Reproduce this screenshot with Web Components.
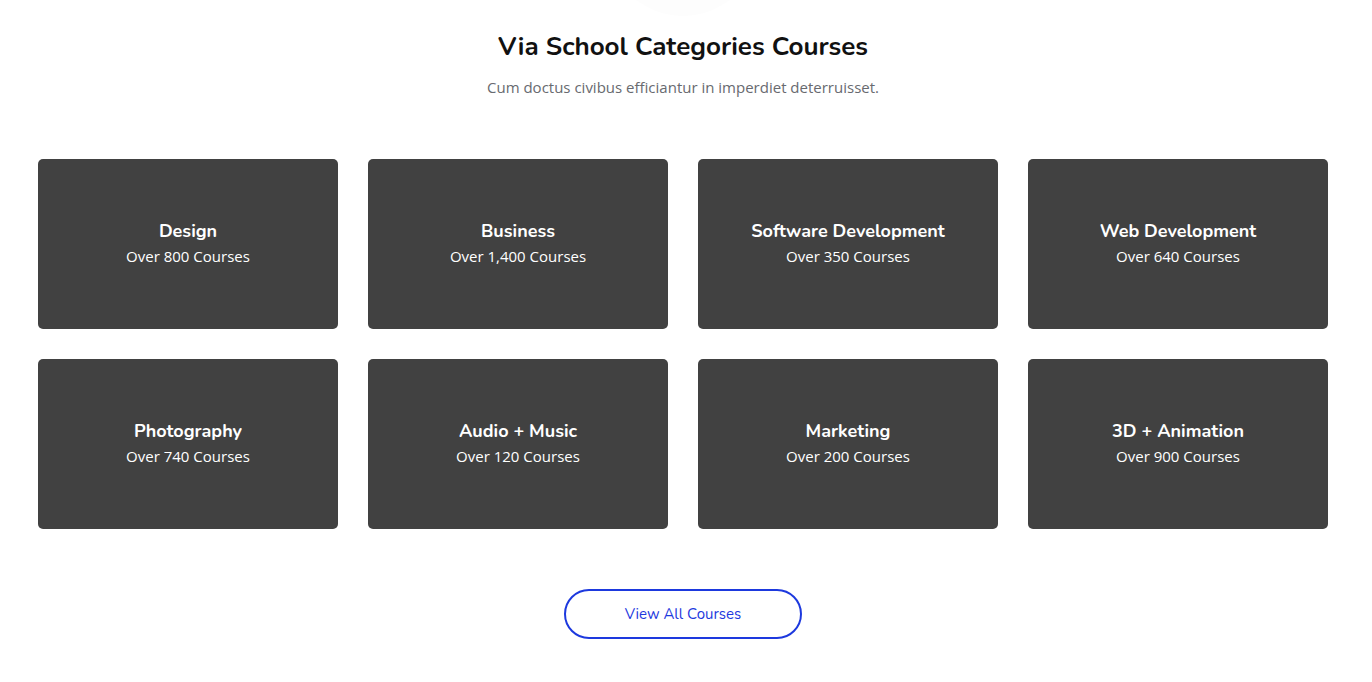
<!DOCTYPE html>
<html lang="en">
<head>
<meta charset="utf-8">
<meta name="viewport" content="width=device-width, initial-scale=1">
<title>Via School Categories Courses</title>
<style>
  body {
    margin: 0;
    background: #fff;
    color: #111;
    font-family: "Open Sans", "Noto Sans", sans-serif;
    --heading-font: "Nunito", "Lato", sans-serif;
    --accent: #1d39de;
  }
</style>
</head>
<body>
<category-section>
  <span slot="title">Via School Categories Courses</span>
  <span slot="intro">Cum doctus civibus efficiantur in imperdiet deterruisset.</span>
  <category-card count="800">Design</category-card>
  <category-card count="1,400">Business</category-card>
  <category-card count="350">Software Development</category-card>
  <category-card count="640">Web Development</category-card>
  <category-card count="740">Photography</category-card>
  <category-card count="120">Audio + Music</category-card>
  <category-card count="200">Marketing</category-card>
  <category-card count="900">3D + Animation</category-card>
  <outline-link slot="action" href="#courses">View All Courses</outline-link>
</category-section>

<template id="section-template">
  <style>
    :host { display: block; position: relative; overflow: hidden; padding: 31px 44px 40px 38px; }
    .inner { max-width: 1290px; margin: 0 auto; }
    /* Soft disc behind the heading, mostly above the section */
    .inner::before {
      content: ""; position: absolute; top: -134px; left: calc(50% - 78px);
      width: 150px; height: 150px; border-radius: 50%; background: #fdfdfd;
    }
    header { position: relative; text-align: center; }
    h2 { margin: 0; font: 700 26px/32px var(--heading-font); color: #111; }
    p { margin: 10px 0 0; font-size: 15px; line-height: 28px; color: #686a6f; }
    .grid {
      display: grid; gap: 30px; margin: 58px 0 60px;
      grid-template-columns: repeat(4, minmax(0, 1fr));
    }
    .action { display: flex; justify-content: center; }
    @media (max-width: 1000px) { .grid { grid-template-columns: repeat(2, minmax(0, 1fr)); } }
    @media (max-width: 560px) { .grid { grid-template-columns: 1fr; } }
  </style>
  <section class="inner">
    <header>
      <h2><slot name="title"></slot></h2>
      <p><slot name="intro"></slot></p>
    </header>
    <div class="grid"><slot></slot></div>
    <div class="action"><slot name="action"></slot></div>
  </section>
</template>

<template id="card-template">
  <style>
    :host { display: block; }
    a {
      display: flex; flex-direction: column; align-items: center; justify-content: center;
      box-sizing: border-box; min-height: 170px; padding: 16px; border-radius: 5px;
      background: #414141; color: #fff; text-align: center; text-decoration: none;
    }
    h3 { margin: 0; font: 700 18px/24px var(--heading-font); }
    span { font-size: 15px; line-height: 26px; }
  </style>
  <a href="#category"><h3><slot></slot></h3><span class="count"></span></a>
</template>

<template id="link-template">
  <style>
    :host { display: block; }
    a {
      display: block; padding: 0 59px; border: 2px solid var(--accent); border-radius: 25px;
      background: #fff; color: var(--accent); text-decoration: none;
      font: 400 15px/46px var(--heading-font);
    }
  </style>
  <a><slot></slot></a>
</template>

<script>
  class TemplateElement extends HTMLElement {
    constructor() {
      super();
      const template = document.getElementById(this.constructor.template);
      this.attachShadow({ mode: "open" }).append(template.content.cloneNode(true));
    }
  }
  class CategorySection extends TemplateElement {
    static template = "section-template";
  }
  class CategoryCard extends TemplateElement {
    static template = "card-template";
    connectedCallback() {
      this.shadowRoot.querySelector(".count").textContent = `Over ${this.getAttribute("count")} Courses`;
    }
  }
  class OutlineLink extends TemplateElement {
    static template = "link-template";
    connectedCallback() {
      this.shadowRoot.querySelector("a").href = this.getAttribute("href");
    }
  }
  customElements.define("category-section", CategorySection);
  customElements.define("category-card", CategoryCard);
  customElements.define("outline-link", OutlineLink);
</script>
</body>
</html>
